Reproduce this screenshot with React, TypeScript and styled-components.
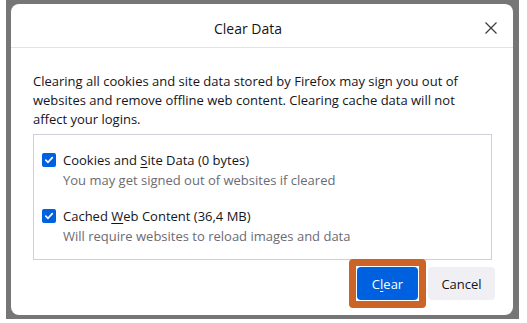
import React from "react";
import styled, { createGlobalStyle } from "styled-components";

const GlobalStyle = createGlobalStyle`
  html, body { margin: 0; padding: 0; background: #ffffff; }
  body { font-family: "Open Sans", "Noto Sans", Arial, sans-serif; }
  * { box-sizing: border-box; }
`;

const Frame = styled.div`
  margin-left: 6px;
  width: 513px;
  height: 319px;
  background: #767676;
  padding: 4px 6px 4px 5px;
`;

const Dialog = styled.div`
  height: 100%;
  background: #ffffff;
  border-radius: 8px;
  display: flex;
  flex-direction: column;
  color: #15141a;
`;

const Header = styled.div`
  height: 44px;
  display: flex;
  align-items: center;
  padding: 5px 16px 0 0;
  border-bottom: 1px solid #e3e3e6;
`;

const Title = styled.div`
  flex: 1;
  text-align: center;
  font-size: 14px;
  color: #15141a;
`;

const CloseButton = styled.button`
  width: 12px;
  height: 12px;
  padding: 0;
  border: 0;
  background: transparent;
  display: flex;
  align-items: center;
  justify-content: center;
  cursor: pointer;
`;

const Body = styled.div`
  flex: 1;
  display: flex;
  flex-direction: column;
  padding: 24px 21px 0 22px;
`;

const Intro = styled.p`
  margin: 0;
  font-size: 13px;
  line-height: 19px;
  color: #15141a;
  white-space: nowrap;
`;

const OptionsBox = styled.div`
  margin-top: 5px;
  border: 1px solid #cfcfd8;
  padding: 15px 8px 13px 8px;
  display: flex;
  flex-direction: column;
  gap: 16px;
`;

const Option = styled.label`
  display: grid;
  grid-template-columns: 14px 1fr;
  column-gap: 7px;
  align-items: center;
`;

const Check = styled.span`
  width: 14px;
  height: 14px;
  border-radius: 2px;
  background: #0061e0;
  display: flex;
  align-items: center;
  justify-content: center;
`;

const OptionLabel = styled.span`
  font-size: 13px;
  line-height: 20px;
  color: #15141a;
`;

const OptionHint = styled.span`
  grid-column: 2;
  font-size: 13px;
  line-height: 20px;
  color: #6b6b73;
`;

const Footer = styled.div`
  display: flex;
  justify-content: flex-end;
  gap: 10px;
  padding: 6px 18px 15px 0;
`;

const Highlight = styled.span`
  position: relative;
  display: inline-flex;
  &::before {
    content: "";
    position: absolute;
    inset: -8px;
    border: 7px solid #cc6428;
    border-radius: 4px;
    pointer-events: none;
  }
`;

const Button = styled.button<{ $primary?: boolean }>`
  height: 33px;
  border: 0;
  border-radius: 4px;
  font-family: "Open Sans", "Noto Sans", Arial, sans-serif;
  font-size: 13px;
  font-weight: 500;
  padding: 0;
  width: ${(p) => (p.$primary ? "61px" : "67px")};
  background: ${(p) => (p.$primary ? "#0061e0" : "#f0f0f4")};
  color: ${(p) => (p.$primary ? "#ffffff" : "#15141a")};
`;

const U = styled.span`
  text-decoration: underline;
  text-underline-offset: 2px;
`;

const CheckMark = () => (
  <svg width="10" height="10" viewBox="0 0 10 10">
    <path d="M1.8 5.2 L4 7.3 L8.3 2.6" fill="none" stroke="#fff" strokeWidth="1.7" strokeLinecap="round" strokeLinejoin="round" />
  </svg>
);

export default function App() {
  return (
    <>
      <GlobalStyle />
      <Frame>
        <Dialog>
          <Header>
            <Title>Clear Data</Title>
            <CloseButton aria-label="Close">
              <svg width="12" height="12" viewBox="0 0 12 12">
                <path d="M0.5 0.5 L11.5 11.5 M11.5 0.5 L0.5 11.5" stroke="#3a3a3f" strokeWidth="1.2" />
              </svg>
            </CloseButton>
          </Header>
          <Body>
            <Intro>
              Clearing all cookies and site data stored by Firefox may sign you out of
              <br />
              websites and remove offline web content. Clearing cache data will not
              <br />
              affect your logins.
            </Intro>
            <OptionsBox>
              <Option>
                <Check><CheckMark /></Check>
                <OptionLabel>
                  Cookies and <U>S</U>ite Data (0 bytes)
                </OptionLabel>
                <OptionHint>You may get signed out of websites if cleared</OptionHint>
              </Option>
              <Option>
                <Check><CheckMark /></Check>
                <OptionLabel>
                  Cached <U>W</U>eb Content (36,4 MB)
                </OptionLabel>
                <OptionHint>Will require websites to reload images and data</OptionHint>
              </Option>
            </OptionsBox>
          </Body>
          <Footer>
            <Highlight>
              <Button $primary>
                C<U>l</U>ear
              </Button>
            </Highlight>
            <Button>Cancel</Button>
          </Footer>
        </Dialog>
      </Frame>
    </>
  );
}
